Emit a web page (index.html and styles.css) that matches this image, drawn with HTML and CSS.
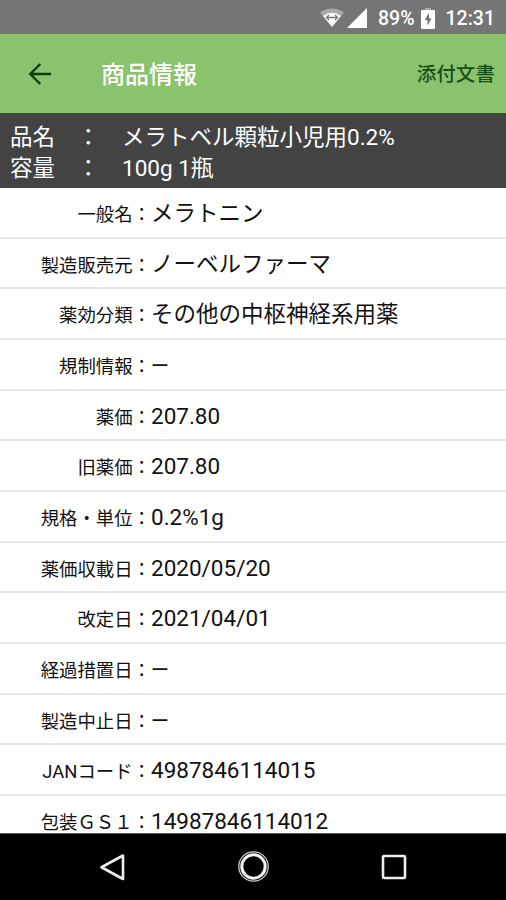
FILE: index.html
```html
<!DOCTYPE html>
<html lang="ja">
<head>
<meta charset="utf-8">
<title>商品情報</title>
<link rel="stylesheet" href="styles.css">
</head>
<body>
<div class="screen">
  <div class="status">
    <svg class="status-wifi" viewBox="0 0 26 20" width="26" height="20">
      <path d="M1 4.500Q13-3.500 25 4.500L22 8.500H4Z" fill="#a9a9a9"/>
      <path d="M4 8Q13 1.500 22 8L13 19Z" fill="#fff"/>
      <path d="M7.500 9.500h11M10 7L7.500 9.500 10 12M16 7l2.500 2.500L16 12" fill="none" stroke="#777" stroke-width="1.300"/>
    </svg>
    <svg class="status-signal" viewBox="0 0 20 20" width="20" height="20"><path d="M20 0V20H0Z" fill="#fff"/></svg>
    <span class="status-percent">89%</span>
    <svg class="status-battery" viewBox="0 0 14 21" width="14" height="21">
      <path d="M4 0h6v2H4Z" fill="#a9a9a9"/><rect y="2" width="14" height="19" rx="1" fill="#fff"/>
      <path d="M8 5L3.500 12H6.500V17.500L10.500 10.500H8Z" fill="#707070"/>
    </svg>
    <span class="status-time">12:31</span>
  </div>
  <header class="appbar">
    <svg class="back" viewBox="0 0 24 24" width="24" height="24"><path d="M23 12H2.500M12.300 2L2.300 12l10 10" fill="none" stroke="#073e0b" stroke-width="2.400"/></svg>
    <h1 class="title">商品情報</h1>
    <span class="action">添付文書</span>
  </header>
  <section class="product">
    <span>品名</span><span>：</span><span>メラトベル顆粒小児用0.2%</span>
    <span>容量</span><span>：</span><span>100g 1瓶</span>
  </section>
  <main class="list">
    <div class="row"><span class="label">一般名：</span><span class="value">メラトニン</span></div>
    <div class="row"><span class="label">製造販売元：</span><span class="value">ノーベルファーマ</span></div>
    <div class="row"><span class="label">薬効分類：</span><span class="value">その他の中枢神経系用薬</span></div>
    <div class="row"><span class="label">規制情報：</span><span class="value">—</span></div>
    <div class="row"><span class="label">薬価：</span><span class="value">207.80</span></div>
    <div class="row"><span class="label">旧薬価：</span><span class="value">207.80</span></div>
    <div class="row"><span class="label">規格・単位：</span><span class="value">0.2%1g</span></div>
    <div class="row"><span class="label">薬価収載日：</span><span class="value">2020/05/20</span></div>
    <div class="row"><span class="label">改定日：</span><span class="value">2021/04/01</span></div>
    <div class="row"><span class="label">経過措置日：</span><span class="value">—</span></div>
    <div class="row"><span class="label">製造中止日：</span><span class="value">—</span></div>
    <div class="row"><span class="label">JANコード：</span><span class="value">4987846114015</span></div>
    <div class="row"><span class="label">包装ＧＳ１：</span><span class="value">14987846114012</span></div>
  </main>
  <nav class="navbar">
    <svg viewBox="0 0 32 32" width="32" height="32"><path d="M26 4.500V28L4.500 16.250Z" fill="none" stroke="#eee" stroke-width="2.600" stroke-linejoin="round"/></svg>
    <svg viewBox="0 0 32 32" width="32" height="32"><circle cx="15.500" cy="15.500" r="14.700" fill="none" stroke="#ccc" stroke-width="1.300"/><circle cx="15.500" cy="15.500" r="11.700" fill="none" stroke="#f5f5f5" stroke-width="3"/></svg>
    <svg viewBox="0 0 32 32" width="32" height="32"><rect x="5" y="5" width="22" height="22" rx="1" fill="none" stroke="#eee" stroke-width="2.600"/></svg>
  </nav>
</div>
</body>
</html>
```

FILE: styles.css
```css
* { box-sizing: border-box; }
body {
  margin: 0;
  font-family: Roboto, "Noto Sans CJK JP", sans-serif;
  color: #111;
}
.screen {
  width: 506px;
  height: 900px;
  display: flex;
  flex-direction: column;
  overflow: hidden;
  background: #fff;
}
.status {
  flex: none;
  height: 34px;
  padding: 2px 11px 0 0;
  display: flex;
  align-items: center;
  justify-content: flex-end;
  background: #757575;
  color: #fff;
  font-size: 19.5px;
  font-weight: 500;
}
.status-signal { margin: 0 11px 0 2px; }
.status-battery { margin: 0 11px 0 6px; }
.appbar {
  flex: none;
  height: 79px;
  padding: 0 11px 0 28px;
  display: flex;
  align-items: center;
  background: #8bc26e;
}
.title {
  margin: 0 auto 0 49px;
  padding-top: 2px;
  font-size: 24px;
  font-weight: 500;
  line-height: 36px;
  color: #fff;
}
.action {
  padding-top: 2px;
  font-size: 19.6px;
  font-weight: 500;
  line-height: 30px;
  color: #155019;
}
.product {
  flex: none;
  height: 75px;
  padding: 9px 10px 0;
  display: grid;
  grid-template-columns: 67px 45px 1fr;
  grid-auto-rows: 30.5px;
  align-content: start;
  background: #434343;
  color: #fff;
  font-size: 22.5px;
  line-height: 30px;
}
.list {
  flex: 1;
  min-height: 0;
  overflow: hidden;
}
.row {
  height: 50.68px;
  border-bottom: 2px solid #e7e7e7;
  display: flex;
  align-items: baseline;
  line-height: 51px;
}
.label {
  width: 151px;
  text-align: right;
  font-size: 18.4px;
}
.value { font-size: 22.5px; }
.navbar {
  flex: none;
  height: 67px;
  padding: 0 96px 0 97px;
  display: flex;
  align-items: center;
  justify-content: space-between;
  border-top: 1px solid #555;
  background: #000;
}
```
